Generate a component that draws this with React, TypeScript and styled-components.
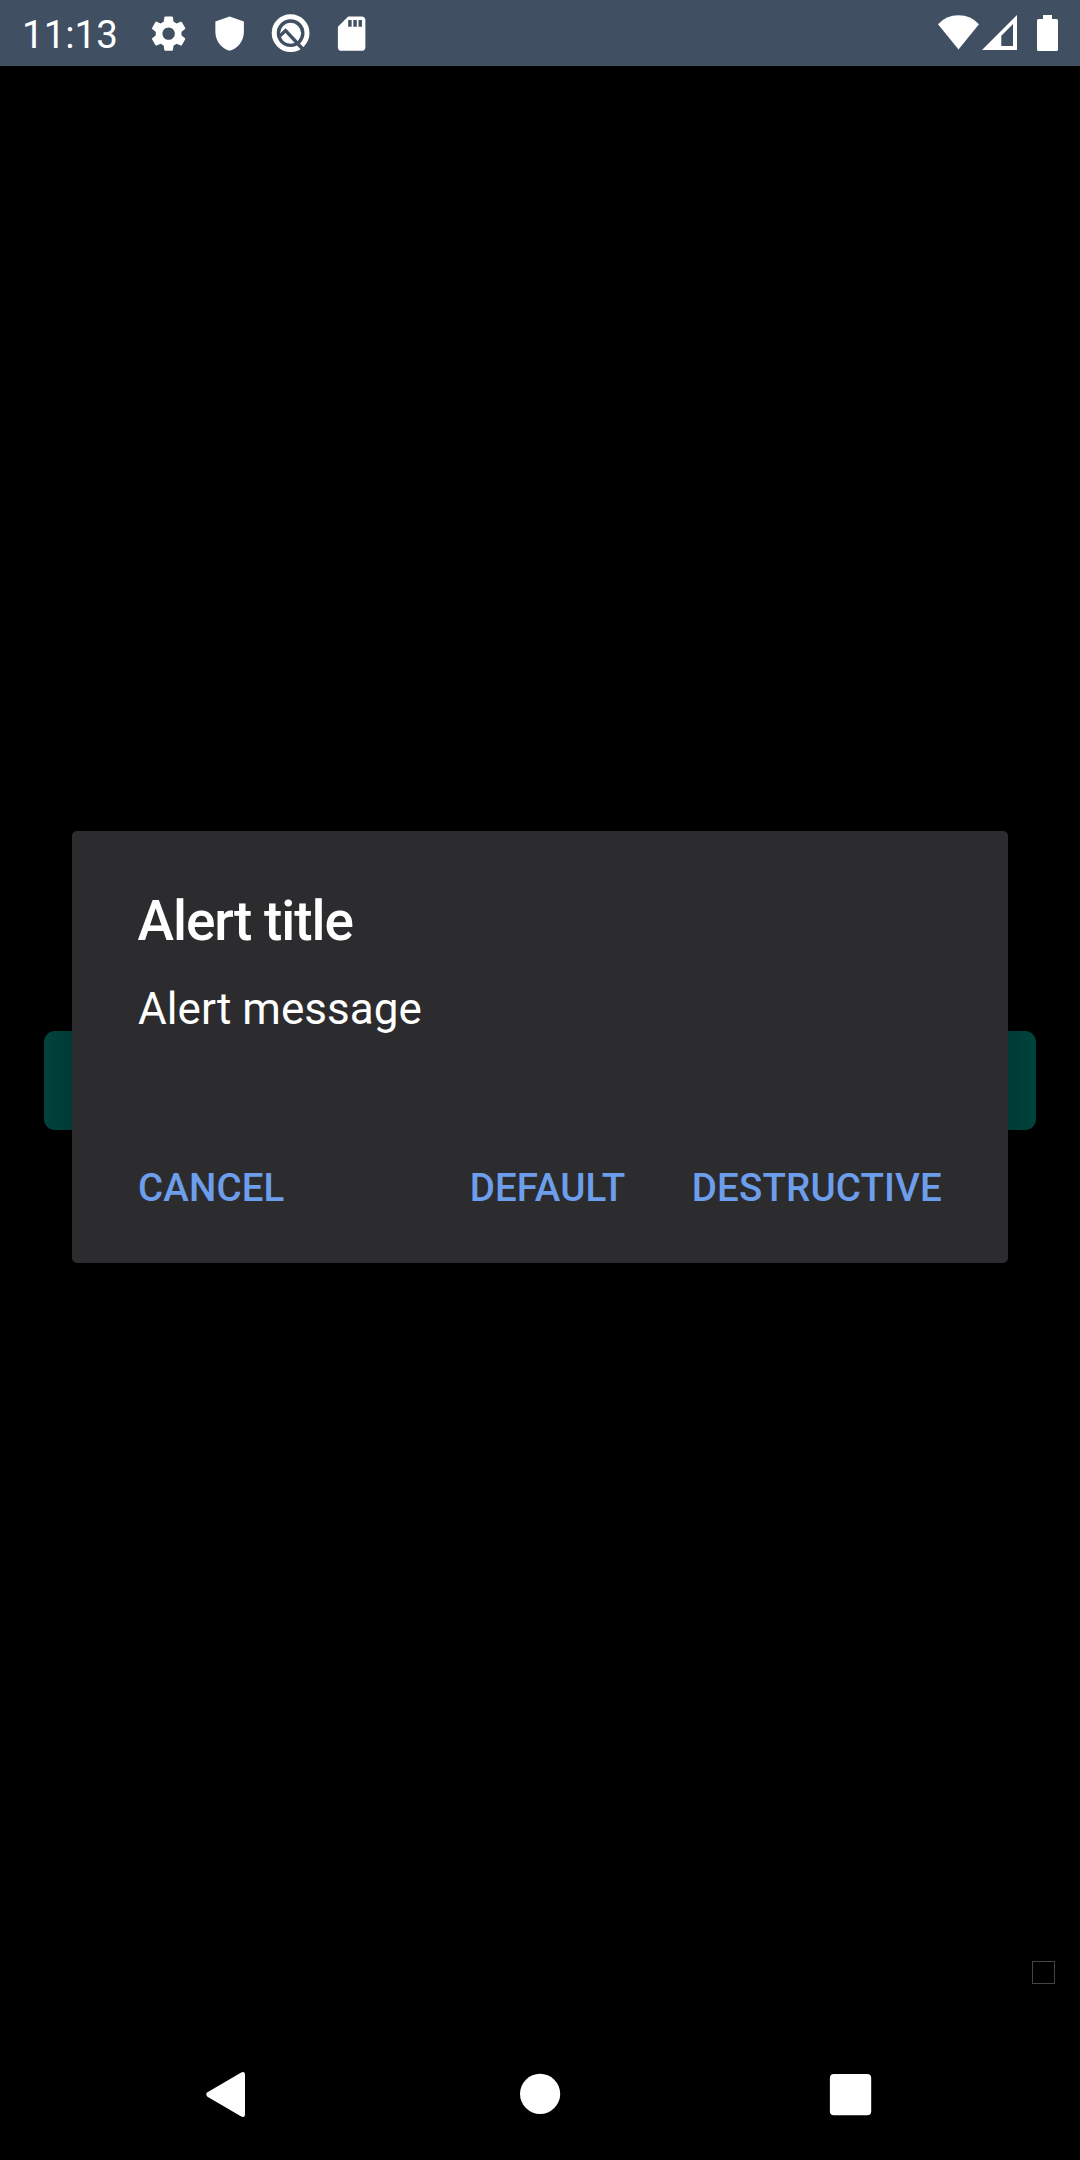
import React from "react";
import styled, { createGlobalStyle } from "styled-components";

const GlobalStyle = createGlobalStyle`
  * { box-sizing: border-box; }
  body { margin: 0; background: #000; }
`;

const Screen = styled.div`
  position: relative;
  display: flex;
  flex-direction: column;
  width: 1080px;
  height: 2160px;
  overflow: hidden;
  background: #000;
  font-family: Roboto, "Noto Sans", sans-serif;
`;

const StatusBar = styled.header`
  display: flex;
  flex: none;
  align-items: center;
  height: 66px;
  padding: 0 14px 0 22px;
  background: #404f61;
`;

const Time = styled.span`
  width: 125.6px;
  padding-top: 3px;
  font-size: 38.5px;
  line-height: 46px;
  color: #fff;
`;

const Notifications = styled.div`
  display: flex;
  flex: 1;
  gap: 19.75px;
  padding-top: 1px;
`;

const Indicators = styled.div`
  display: flex;
`;

const Icon = styled.svg<{ $w?: number; $h?: number }>`
  display: block;
  flex: none;
  width: ${(p) => p.$w ?? 41.25}px;
  height: ${(p) => p.$h ?? 41.25}px;
  fill: #fff;
`;

const Content = styled.main`
  display: flex;
  flex: 1;
  flex-direction: column;
  justify-content: space-between;
  padding: 965px 25px 44px 44px;
`;

const PageButton = styled.div`
  width: 992px;
  height: 99px;
  border-radius: 11px;
  background: linear-gradient(90deg, #01433c 0, #003a35 30px, #003a35 962px, #01433c 100%);
`;

const Marker = styled.div`
  align-self: flex-end;
  width: 23px;
  height: 23px;
  border: 1px solid #444;
`;

const NavBar = styled.nav`
  display: flex;
  flex: none;
  justify-content: center;
  height: 132px;
`;

const NavItem = styled.div`
  display: flex;
  align-items: center;
  justify-content: center;
  width: 310.6px;
`;

const Dialog = styled.section`
  position: absolute;
  top: 831px;
  left: 72px;
  display: flex;
  flex-direction: column;
  width: 936px;
  height: 432px;
  padding: 56px 66px 0;
  border-radius: 5px;
  background: #2c2c2e;
  color: #fff;
`;

const Title = styled.h1`
  margin: 0 0 0 -0.5px;
  font-size: 55px;
  font-weight: 500;
  line-height: 68px;
  letter-spacing: -1.05px;
`;

const Message = styled.p`
  margin: 28px 0 0;
  font-size: 44px;
  line-height: 52px;
  letter-spacing: 0.05px;
`;

const Actions = styled.div`
  display: flex;
  gap: 66.5px;
  margin-top: 129px;
`;

const Action = styled.span<{ $start?: boolean }>`
  margin-right: ${(p) => (p.$start ? "auto" : "0")};
  font-size: 38.5px;
  font-weight: 500;
  line-height: 48px;
  letter-spacing: 0.14px;
  color: #6d9eeb;
`;

export default function App() {
  return (
    <Screen>
      <GlobalStyle />
      <StatusBar>
        <Time>11:13</Time>
        <Notifications>
          <Icon viewBox="0 0 24 24">
            <path d="M19.43 12.98c.04-.32.07-.64.07-.98s-.03-.66-.07-.98l2.11-1.65c.19-.15.24-.42.12-.64l-2-3.46c-.12-.22-.39-.3-.61-.22l-2.49 1c-.52-.4-1.08-.73-1.69-.98l-.38-2.65C14.46 2.18 14.25 2 14 2h-4c-.25 0-.46.18-.49.42l-.38 2.65c-.61.25-1.17.59-1.69.98l-2.49-1c-.23-.09-.49 0-.61.22l-2 3.46c-.13.22-.07.49.12.64l2.11 1.65c-.04.32-.07.65-.07.98s.03.66.07.98l-2.11 1.65c-.19.15-.24.42-.12.64l2 3.46c.12.22.39.3.61.22l2.49-1c.52.4 1.08.73 1.69.98l.38 2.65c.03.24.24.42.49.42h4c.25 0 .46-.18.49-.42l.38-2.65c.61-.25 1.17-.59 1.69-.98l2.49 1c.23.09.49 0 .61-.22l2-3.46c.12-.22.07-.49-.12-.64l-2.11-1.65zM12 15.6c-1.98 0-3.6-1.62-3.6-3.6s1.62-3.6 3.6-3.6 3.6 1.62 3.6 3.6-1.62 3.6-3.6 3.6z" />
          </Icon>
          <Icon viewBox="0 0 24 24">
            <path d="M12 2L3.7 5v6.1c0 5.05 3.6 9.75 8.3 10.9 4.7-1.15 8.3-5.85 8.3-10.9V5L12 2z" />
          </Icon>
          <Icon viewBox="0 0 41.25 41.25">
            <circle cx="20.6" cy="20.1" r="16.4" fill="none" stroke="#fff" strokeWidth="5" />
            <circle cx="20.6" cy="20.3" r="10.5" />
            <path d="M8.5 24.3L15.6 17.6L36 39.5" fill="none" stroke="#404f61" strokeWidth="3.4" />
          </Icon>
          <Icon viewBox="0 0 24 24">
            <path d="M18 2h-8L4.02 8 4 20c0 1.1.9 2 2 2h12c1.1 0 2-.9 2-2V4c0-1.1-.9-2-2-2zm-6 6h-2V4h2v4zm3 0h-2V4h2v4zm3 0h-2V4h2v4z" />
          </Icon>
        </Notifications>
        <Indicators>
          <Icon $w={44} $h={42} viewBox="936 12 44 42">
            <path d="M938 24.2Q946 15.2 958.5 15.2T979 24.2L958.5 49.5Z" />
          </Icon>
          <Icon $w={44} $h={42} viewBox="980 12 44 42">
            <path fillRule="evenodd" d="M982 50L1017 15V50ZM1001.3 35.8V46H1013V24.1Z" />
          </Icon>
          <Icon $w={42} $h={42} viewBox="1024 12 42 42">
            <path d="M1043 15h9v4h4.4a1.6 1.6 0 0 1 1.6 1.6v28.8a1.6 1.6 0 0 1-1.6 1.6h-17.8a1.6 1.6 0 0 1-1.6-1.6V20.6a1.6 1.6 0 0 1 1.6-1.6h4.4z" />
          </Icon>
        </Indicators>
      </StatusBar>
      <Content>
        <PageButton />
        <Marker />
      </Content>
      <NavBar>
        <NavItem>
          <Icon $w={55} $h={55} viewBox="202 2067 55 55">
            <path d="M207.5 2092.3L240.8 2072.7Q245 2070.8 245 2075V2114Q245 2118.2 240.8 2116.3L207.5 2096.7Q205 2094.5 207.5 2092.3Z" />
          </Icon>
        </NavItem>
        <NavItem>
          <Icon $w={55} $h={55} viewBox="0 0 55 55">
            <circle cx="27.1" cy="26.9" r="20.1" />
          </Icon>
        </NavItem>
        <NavItem>
          <Icon $w={55} $h={55} viewBox="0 0 55 55">
            <rect x="6.9" y="7" width="41.3" height="41.3" rx="4" />
          </Icon>
        </NavItem>
      </NavBar>
      <Dialog role="dialog">
        <Title>Alert title</Title>
        <Message>Alert message</Message>
        <Actions>
          <Action $start>CANCEL</Action>
          <Action>DEFAULT</Action>
          <Action>DESTRUCTIVE</Action>
        </Actions>
      </Dialog>
    </Screen>
  );
}
